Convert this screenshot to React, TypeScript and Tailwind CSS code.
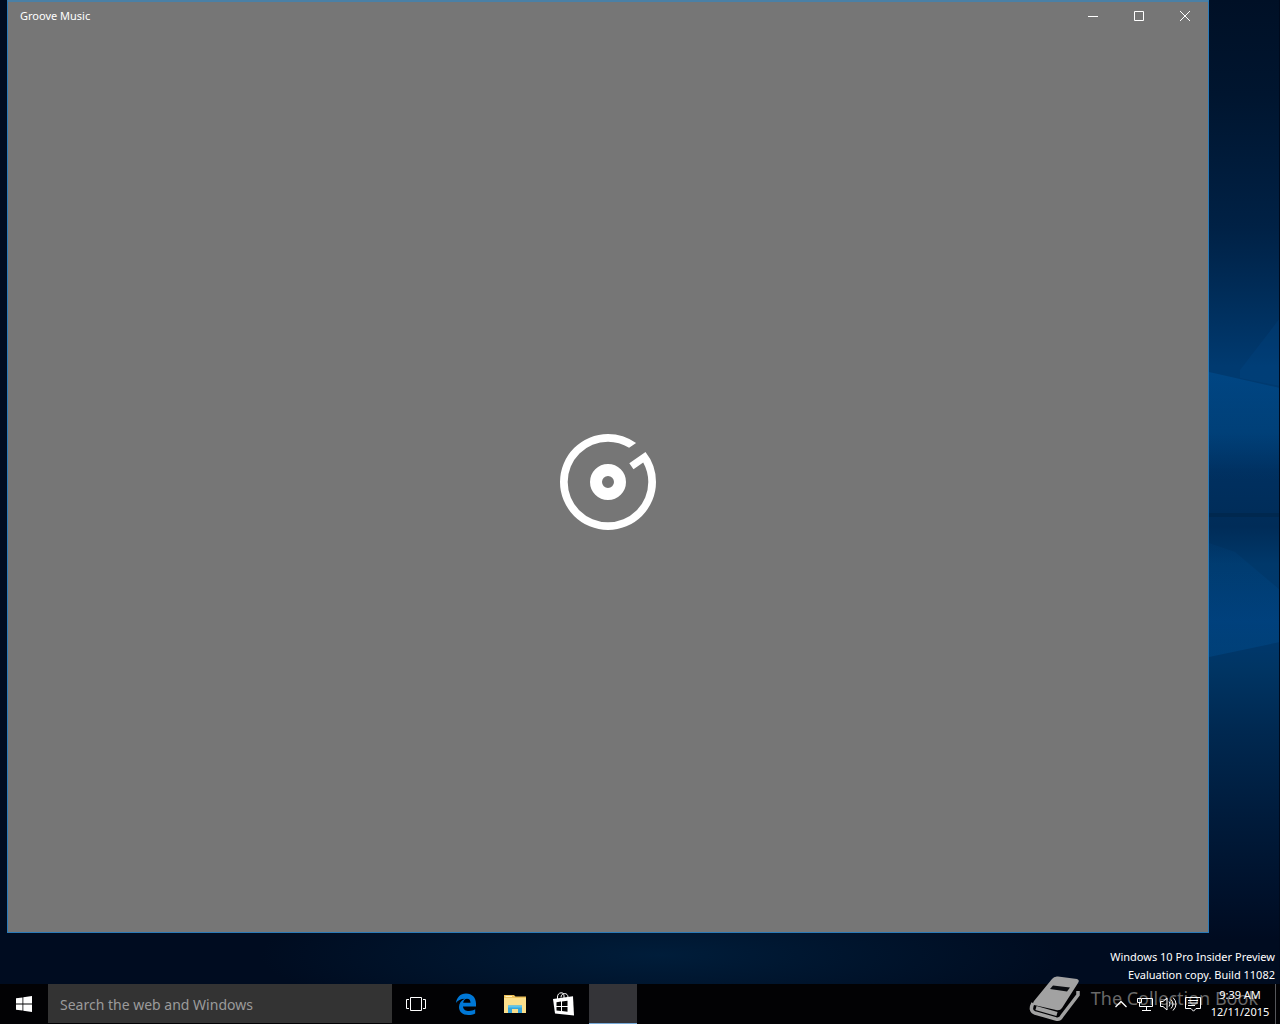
import type { ReactNode } from "react";

// ─── Desktop ──────────────────────────────────────────────────────────────────

/** Dark blue wallpaper with the light beams that show beside the window */
function Wallpaper() {
  return (
    <svg
      className="absolute inset-0 h-full w-full"
      viewBox="0 0 1280 1024"
      preserveAspectRatio="none"
      aria-hidden="true"
    >
      <defs>
        <linearGradient id="side" x1="0" y1="0" x2="0" y2="1">
          <stop offset="0" stopColor="#001026" />
          <stop offset="0.1" stopColor="#00152f" />
          <stop offset="0.24" stopColor="#002145" />
          <stop offset="0.31" stopColor="#002c58" />
          <stop offset="0.39" stopColor="#003a70" />
          <stop offset="0.46" stopColor="#003b70" />
          <stop offset="0.5" stopColor="#003060" />
          <stop offset="0.56" stopColor="#002c58" />
          <stop offset="0.6" stopColor="#00386a" />
          <stop offset="0.66" stopColor="#003a72" />
          <stop offset="0.71" stopColor="#003564" />
          <stop offset="0.78" stopColor="#002850" />
          <stop offset="0.87" stopColor="#001b3b" />
          <stop offset="0.95" stopColor="#00112b" />
          <stop offset="1" stopColor="#000b20" />
        </linearGradient>
        <linearGradient id="beam" x1="0" y1="0" x2="0" y2="1">
          <stop offset="0" stopColor="#0057a0" stopOpacity="0.4" />
          <stop offset="1" stopColor="#0057a0" stopOpacity="0" />
        </linearGradient>
        <linearGradient id="lowBeam" x1="0" y1="0" x2="0" y2="1">
          <stop offset="0" stopColor="#0057a0" stopOpacity="0.08" />
          <stop offset="1" stopColor="#0057a0" stopOpacity="0.3" />
        </linearGradient>
        <radialGradient id="floor">
          <stop offset="0" stopColor="#001d3a" />
          <stop offset="1" stopColor="#001d3a" stopOpacity="0" />
        </radialGradient>
      </defs>
      <rect width="1280" height="1024" fill="#000c20" />
      <rect x="1200" width="80" height="940" fill="url(#side)" />
      <path d="M1209 372 1280 388V480H1209Z" fill="url(#beam)" />
      <path d="M1240 370 1280 318V386L1240 378Z" fill="#0057a0" opacity="0.15" />
      <path d="M1209 543 1235 552 1280 590V642L1209 657Z" fill="url(#lowBeam)" />
      <rect x="1209" y="513" width="71" height="4" fill="#00284f" />
      <ellipse cx="660" cy="955" rx="400" ry="70" fill="url(#floor)" />
      <rect x="1279" width="1" height="984" fill="#000a1c" />
    </svg>
  );
}

// ─── Icons ────────────────────────────────────────────────────────────────────

function GrooveLogo() {
  return (
    <svg className="size-24" viewBox="0 0 96 96" aria-label="Groove Music logo" role="img">
      {/* Open ring with the tone arm, drawn in quarter arcs round 48,48 */}
      <path
        d="M76.100 9.100A48 48 0 0 0 48 0A48 48 0 0 0 0 48A48 48 0 0 0 48 96A48 48 0 0 0 96 48A48 48 0 0 0 85.500 18.100L69.300 29.300 73.500 35.300 83.200 28.400A40.300 40.300 0 0 1 88.300 48A40.300 40.300 0 0 1 48 88.300A40.300 40.300 0 0 1 7.700 48A40.300 40.300 0 0 1 48 7.700A40.300 40.300 0 0 1 69.100 13.700Z"
        fill="#fff"
      />
      <circle cx="48" cy="48" r="12" fill="none" stroke="#fff" strokeWidth="12" />
    </svg>
  );
}

function StartIcon() {
  return (
    <svg className="size-4" viewBox="0 0 16 16" fill="#fff" aria-hidden="true">
      <path d="M0 2.300 6.500 1.400V7.500H0ZM7.300 1.200 16 0V7.500H7.300ZM0 8.400H6.500V14.600L0 13.700ZM7.300 8.400H16V16L7.300 14.700Z" />
    </svg>
  );
}

function TaskViewIcon() {
  return (
    <svg className="h-4 w-5" viewBox="0 0 20 16" fill="none" stroke="#fff" aria-hidden="true">
      <path d="M4.500 1.500h11v13h-11zM3 3.500H.5v9H3M17 3.500h2.500v9H17" />
    </svg>
  );
}

function EdgeIcon() {
  return (
    <svg className="size-6" viewBox="0 0 24 24" fill="#0078d7" aria-hidden="true">
      <path d="M2 11C2.600 5.700 6.200 1.500 12 1.500c6.200 0 10 4.300 10 10v2.900H9c.2 3.200 2.800 4.500 6 4.500 2.300 0 4.400-.6 6.200-1.700v4.300C19.200 22.600 17 23 14.300 23 8.600 23 5 19.800 5 15c0-3.800 2.200-6.600 5.800-8.300C6.800 6.800 3.600 8.400 2 11Zm7.200-.2h7.300c0-2.500-1-4.100-3.500-4.100-2.200 0-3.600 1.700-3.800 4.100Z" />
    </svg>
  );
}

function ExplorerIcon() {
  return (
    <svg className="h-5 w-6" viewBox="0 0 24 20" aria-hidden="true">
      <path d="M1 1h10l1.500 1.500H23V19H1Z" fill="#edc25c" />
      <path d="M1 4h22v15H1Z" fill="#fbdf8c" />
      <path d="M2.500 2H9v1H2.500Z" fill="#fff3c4" />
      <path d="M5 11.500h14V19h-4v-4H9v4H5Z" fill="#35a6dc" />
      <path d="M5 11.500h14v2H5Z" fill="#5cc5ee" />
    </svg>
  );
}

function StoreIcon() {
  return (
    <svg className="size-6" viewBox="0 0 24 24" aria-hidden="true">
      <path d="M5.500 7V5C5.500 2.500 7 1 9 .8S12 2 12 4v2M9 5.500C9 3 10.500 1.500 12.500 1.500S16 3 16 5" fill="none" stroke="#fff" />
      <path d="M1 7 21 4.200 22 23.500 3 21.500Z" fill="#fff" />
      <path d="M4.500 10.200 9 9.600V14H4.500ZM10 9.500 15.500 8.800V14H10ZM4.500 15H9v4L4.500 18.500ZM10 15h5.500v4.800L10 19.100Z" fill="#050505" />
    </svg>
  );
}

function BookLogo() {
  return (
    <svg className="h-12 w-13 shrink-0" viewBox="0 0 52 48" aria-hidden="true">
      <path d="M23 3Q25 0 29 .5L48 3Q51 4 49 7L33 32Q31 35 27 34L5 29Q3 28 5 25Z" fill="#a2a2a2" />
      <path d="M24 9.500 41 11.500 38 15.500 21 13Z" fill="#0a0c10" />
      <path d="M4 27Q0 35 6 37L27 43Q31 44 33 40L49 19V15" fill="none" stroke="#a2a2a2" strokeWidth="3.500" />
      <path d="M7 32 28 38" stroke="#a2a2a2" strokeWidth="4" />
    </svg>
  );
}

function ChevronIcon() {
  return (
    <svg className="size-3" viewBox="0 0 12 12" fill="none" stroke="#fff" strokeWidth="1.300" aria-hidden="true">
      <path d="M.5 9 6 3.500 11.500 9" />
    </svg>
  );
}

function NetworkIcon() {
  return (
    <svg className="size-4" viewBox="0 0 16 16" fill="none" stroke="#fff" aria-hidden="true">
      <path d="M5 2.500h10.500v8H3.500M9.500 11v3M5 14.500h9M.5 2.500h4v4h-4zM2.500 7v3.500h2" />
    </svg>
  );
}

function VolumeIcon() {
  return (
    <svg className="h-4 w-5" viewBox="0 0 20 16" fill="none" stroke="#fff" aria-hidden="true">
      <path d="M1.500 5.500H4l4-3.500v12L4 10.500H1.500zM10 5.500q2 2.500 0 5M12 3.500q4 4.500 0 9M14 1.500q6 6.500 0 13" />
    </svg>
  );
}

function ActionCenterIcon() {
  return (
    <svg className="size-4" viewBox="0 0 16 16" fill="none" stroke="#fff" aria-hidden="true">
      <path d="M.5 1.500h15v11H11L8.500 15.200 6 12.500H.5zM3 4.500h10M3 7H13M3 9.500h7" />
    </svg>
  );
}

// ─── Window ───────────────────────────────────────────────────────────────────

function CaptionButton({ label, children }: { label: string; children: ReactNode }) {
  return (
    <button type="button" aria-label={label} className="flex h-7 w-[46px] items-center justify-center hover:bg-white/10">
      <svg className="size-[10px]" viewBox="0 0 10 10" fill="none" stroke="#fff" aria-hidden="true">
        {children}
      </svg>
    </button>
  );
}

function GrooveWindow() {
  return (
    <main className="mr-[71px] mb-[51px] ml-[7px] flex flex-1 flex-col border border-t-2 border-[#2a7ab8] border-t-[#4a80a6] bg-[#767676]">
      <header className="flex items-center justify-between pb-0.5 pl-3">
        <h1 className="text-[11px]">Groove Music</h1>
        <div className="flex">
          <CaptionButton label="Minimize">
            <path d="M0 5.500h10" />
          </CaptionButton>
          <CaptionButton label="Maximize">
            <path d="M.5.500h9v9h-9z" />
          </CaptionButton>
          <CaptionButton label="Close">
            <path d="M0 0l10 10M10 0L0 10" />
          </CaptionButton>
        </div>
      </header>
      <div className="flex flex-1 items-center justify-center">
        <GrooveLogo />
      </div>
    </main>
  );
}

// ─── Taskbar ──────────────────────────────────────────────────────────────────

function TaskButton({ label, children }: { label: string; children?: ReactNode }) {
  return (
    <button type="button" aria-label={label} className="flex h-10 w-12 items-center justify-center hover:bg-white/10">
      {children}
    </button>
  );
}

function TrayButton({ label, children }: { label: string; children: ReactNode }) {
  return (
    <button type="button" aria-label={label} className="flex h-10 w-6 items-center justify-center">
      {children}
    </button>
  );
}

function Taskbar() {
  return (
    <footer className="relative flex h-10 items-center bg-[#020204]">
      {/* Site stamp, shows through behind the tray */}
      <div className="pointer-events-none absolute right-[22px] bottom-0 flex items-center gap-[10px]">
        <BookLogo />
        <span className="pb-1 text-lg leading-6 text-[#686868]">The Collection Book</span>
      </div>

      <TaskButton label="Start">
        <StartIcon />
      </TaskButton>
      <input
        type="search"
        aria-label="Search the web and Windows"
        placeholder="Search the web and Windows"
        className="h-[39px] w-[344px] self-start bg-[#333] px-3 pt-px text-sm text-white outline-none placeholder:text-[#9b9b9b]"
      />
      <TaskButton label="Task View">
        <TaskViewIcon />
      </TaskButton>
      <nav className="flex gap-px pl-0.5" aria-label="Pinned apps">
        <TaskButton label="Microsoft Edge">
          <EdgeIcon />
        </TaskButton>
        <TaskButton label="File Explorer">
          <ExplorerIcon />
        </TaskButton>
        <TaskButton label="Store">
          <StoreIcon />
        </TaskButton>
        <button
          type="button"
          aria-label="Groove Music"
          className="h-10 w-12 border-b border-[#76a9d8] bg-[#343438]"
        />
      </nav>

      <div className="relative ml-auto flex items-center">
        <TrayButton label="Show hidden icons">
          <ChevronIcon />
        </TrayButton>
        <TrayButton label="Network">
          <NetworkIcon />
        </TrayButton>
        <TrayButton label="Volume">
          <VolumeIcon />
        </TrayButton>
        <TrayButton label="Action Center">
          <ActionCenterIcon />
        </TrayButton>
        <button type="button" className="flex h-10 w-[70px] flex-col items-center pt-0.5 text-[11px] leading-[17px]">
          <span>9:39 AM</span>
          <span>12/11/2015</span>
        </button>
        <button type="button" aria-label="Show desktop" className="h-10 w-[5px] border-l border-[#55565a]" />
      </div>
    </footer>
  );
}

export default function App() {
  return (
    <div className="relative flex h-screen min-h-80 flex-col overflow-hidden bg-[#000c20] font-['Noto_Sans',sans-serif] text-white">
      <Wallpaper />
      <div className="relative flex flex-1 flex-col">
        <GrooveWindow />
        <div className="absolute right-[5px] bottom-0 text-right text-[11px] leading-[18px]">
          <p>Windows 10 Pro Insider Preview</p>
          <p>Evaluation copy. Build 11082</p>
        </div>
      </div>
      <Taskbar />
    </div>
  );
}
